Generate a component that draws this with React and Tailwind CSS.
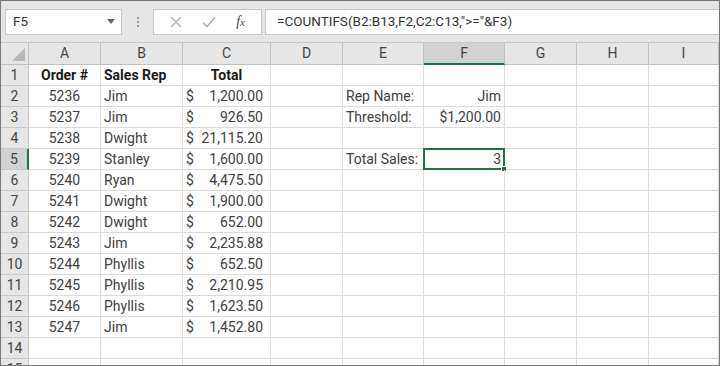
import React from "react";

const cols = ["A", "B", "C", "D", "E", "F", "G", "H", "I"];

const rows = [
  { a: "Order #", b: "Sales Rep", c: null, bold: true },
  { a: "5236", b: "Jim", c: "1,200.00", e: "Rep Name:", f: "Jim" },
  { a: "5237", b: "Jim", c: "926.50", e: "Threshold:", f: "$1,200.00" },
  { a: "5238", b: "Dwight", c: "21,115.20" },
  { a: "5239", b: "Stanley", c: "1,600.00", e: "Total Sales:", f: "3", sel: true },
  { a: "5240", b: "Ryan", c: "4,475.50" },
  { a: "5241", b: "Dwight", c: "1,900.00" },
  { a: "5242", b: "Dwight", c: "652.00" },
  { a: "5243", b: "Jim", c: "2,235.88" },
  { a: "5244", b: "Phyllis", c: "652.50" },
  { a: "5245", b: "Phyllis", c: "2,210.95" },
  { a: "5246", b: "Phyllis", c: "1,623.50" },
  { a: "5247", b: "Jim", c: "1,452.80" },
  {},
  {},
];

const cell = "h-[21px] border-b border-r border-[#dadada] flex items-center overflow-visible whitespace-nowrap";

export default function App() {
  return (
    <div
      className="w-[720px] h-[366px] overflow-hidden border border-[#777] bg-white text-[#404040] flex flex-col"
      style={{ fontFamily: "Roboto, 'Liberation Sans', sans-serif" }}
    >
      {/* toolbar */}
      <div className="h-[41px] shrink-0 bg-[#e6e6e6] flex items-center pl-[4px] pr-0 text-[13px]">
        <div className="w-[117px] h-[26px] bg-white border border-[#c6c6c6] flex items-center justify-between pl-[7px] pr-[6px]">
          <span className="text-[#333] text-[13.5px]">F5</span>
          <svg width="8" height="5" viewBox="0 0 8 5"><path d="M0 0h8L4 5z" fill="#666" /></svg>
        </div>
        <div className="w-[31px] flex flex-col items-center gap-[2px]">
          <div className="w-[2px] h-[2px] bg-[#a0a0a0]" />
          <div className="w-[2px] h-[2px] bg-[#a0a0a0]" />
          <div className="w-[2px] h-[2px] bg-[#a0a0a0]" />
        </div>
        <div className="w-[109px] h-[26px] bg-white border border-[#c6c6c6] flex items-center justify-around px-[6px]">
          <svg width="12" height="12" viewBox="0 0 12 12"><path d="M1 1l10 10M11 1L1 11" stroke="#b0b0b0" strokeWidth="1.4" /></svg>
          <svg width="14" height="12" viewBox="0 0 14 12"><path d="M1 6.5l4 4L13 1.5" stroke="#b0b0b0" strokeWidth="1.6" fill="none" /></svg>
          <span className="italic text-[#444] text-[14px]" style={{ fontFamily: "'Liberation Serif', serif" }}>f<span className="text-[11px]">x</span></span>
        </div>
        <div className="ml-[3px] flex-1 h-[26px] bg-white border-y border-l border-[#c6c6c6] flex items-center pl-[11px] text-[#333] text-[13.5px]">
          =COUNTIFS(B2:B13,F2,C2:C13,"&gt;="&amp;F3)
        </div>
      </div>
      {/* grid */}
      <div className="grid grid-cols-[28px_72px_82px_88px_72px_81px_81px_72px_72px_1fr] border-t border-[#c8c8c8] text-[14px]">
        {/* header row */}
        <div className="h-[22px] bg-[#e6e6e6] border-b border-r border-[#c0c0c0] flex items-end justify-end pr-[3px] pb-[3px]">
          <svg width="13" height="13" viewBox="0 0 13 13"><path d="M13 0V13H0z" fill="#b8b8b8" /></svg>
        </div>
        {cols.map((c) =>
          c === "F" ? (
            <div key={c} className="h-[22px] bg-[#d2d2d2] border-b-2 border-b-[#217346] border-r border-r-[#c0c0c0] flex items-center justify-center text-[#444] pt-[1px]">
              {c}
            </div>
          ) : (
            <div key={c} className="h-[22px] bg-[#e6e6e6] border-b border-r border-[#c0c0c0] flex items-center justify-center text-[#444]">
              {c}
            </div>
          )
        )}
        {rows.map((r, i) => (
          <React.Fragment key={i}>
            <div
              className={
                r.sel
                  ? "h-[21px] bg-[#d2d2d2] border-b border-b-[#c8c8c8] border-r-2 border-r-[#217346] flex items-center justify-center text-[#444]"
                  : "h-[21px] bg-[#e6e6e6] border-b border-r border-[#c8c8c8] flex items-center justify-center text-[#444]"
              }
            >
              {i + 1}
            </div>
            <div className={`${cell} justify-center ${r.bold ? "font-bold text-[#1a1a1a]" : ""}`}>{r.a}</div>
            <div className={`${cell} pl-[3px] ${r.bold ? "font-bold text-[#1a1a1a]" : ""}`}>{r.b}</div>
            {r.bold ? (
              <div className={`${cell} justify-center font-bold text-[#1a1a1a]`}>Total</div>
            ) : r.c ? (
              <div className={`${cell} justify-between pl-[3px] pr-[7px]`}>
                <span>$</span>
                <span>{r.c}</span>
              </div>
            ) : (
              <div className={cell} />
            )}
            <div className={cell} />
            <div className={`${cell} pl-[3px]`}>{r.e}</div>
            <div className={`${cell} justify-end pr-[3px] relative`}>
              {r.f}
              {r.sel && (
                <div className="absolute left-[-1px] top-[-1px] right-[-1px] bottom-[-1px] border-2 border-[#217346]">
                  <div className="absolute right-[-4px] bottom-[-4px] w-[6px] h-[6px] bg-[#217346] border border-white" />
                </div>
              )}
            </div>
            <div className={cell} />
            <div className={cell} />
            <div className={cell} />
          </React.Fragment>
        ))}
      </div>
    </div>
  );
}
